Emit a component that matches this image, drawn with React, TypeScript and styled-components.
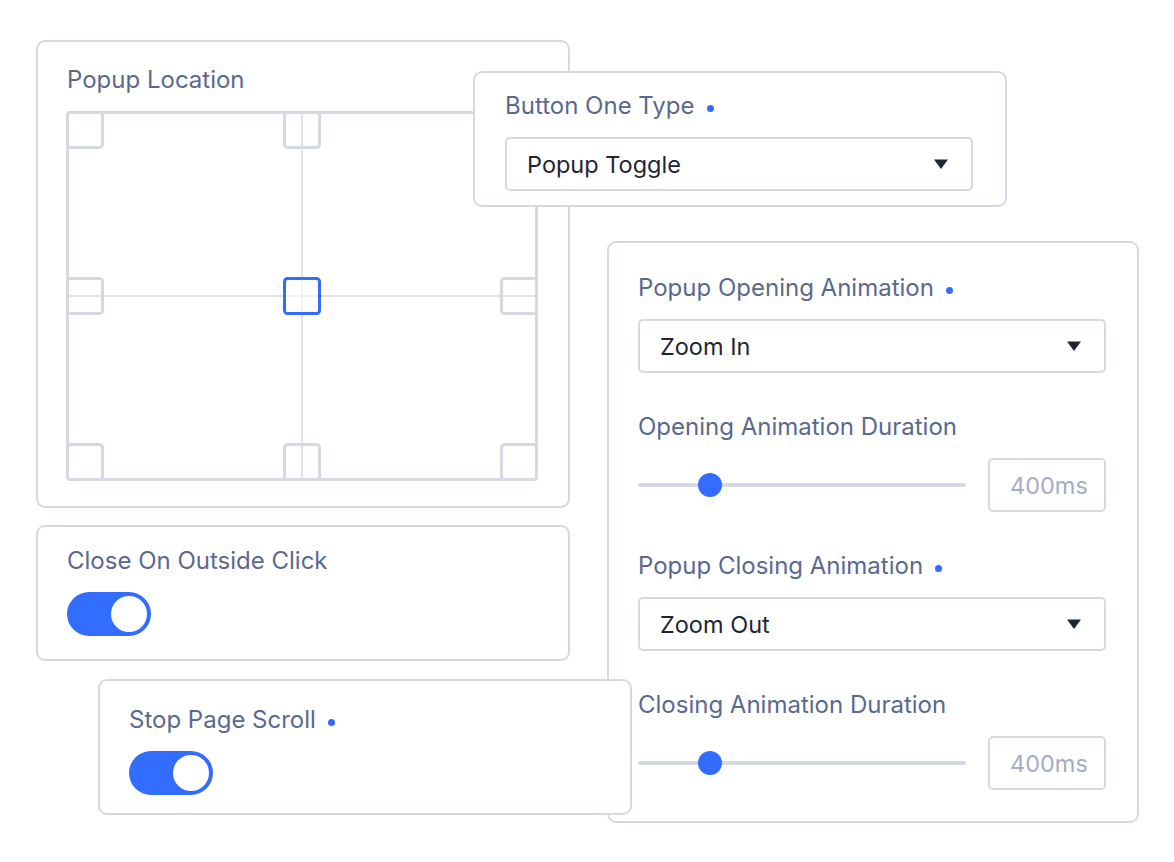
import React from 'react';
import styled, { createGlobalStyle } from 'styled-components';

const GlobalStyle = createGlobalStyle`
  * { box-sizing: border-box; }
  body {
    margin: 0;
    background: #ffffff;
    font-family: Inter, "Noto Sans", "Liberation Sans", sans-serif;
  }
`;

const BORDER = '#d4d9e4';
const BLUE = '#336dff';

const Canvas = styled.div`
  position: relative;
  width: 1174px;
  height: 862px;
  overflow: hidden;
  background: #fff;
`;

// cards float on the canvas and overlap each other
const Card = styled.div<{ $x: number; $y: number; $w: number; $pad: string }>`
  position: absolute;
  left: ${(p) => p.$x}px;
  top: ${(p) => p.$y}px;
  width: ${(p) => p.$w}px;
  padding: ${(p) => p.$pad};
  background: #fff;
  border: 2px solid ${BORDER};
  border-radius: 9px;
  display: flex;
  flex-direction: column;
  gap: 39px;
`;

const Field = styled.div`
  display: flex;
  flex-direction: column;
  gap: 18px;
`;

const Label = styled.div`
  display: flex;
  align-items: center;
  gap: 12px;
  padding-top: 2px;
  font-size: 24px;
  line-height: 26px;
  font-weight: 400;
  color: #5a6990;
  white-space: nowrap;
`;

const Dot = styled.span`
  width: 7px;
  height: 7px;
  margin-top: 4px;
  border-radius: 50%;
  background: ${BLUE};
`;

const Select = styled.div`
  height: 54px;
  display: flex;
  align-items: center;
  justify-content: space-between;
  padding: 0 23px 0 20px;
  border: 2px solid ${BORDER};
  border-radius: 5px;
  font-size: 23.5px;
  font-weight: 400;
  color: #1f2633;
`;

const SliderRow = styled.div`
  display: flex;
  align-items: center;
  gap: 22px;
`;

const Track = styled.div`
  position: relative;
  flex: 1;
  height: 4px;
  border-radius: 2px;
  background: ${BORDER};
`;

const Thumb = styled.span<{ $at: number }>`
  position: absolute;
  top: 50%;
  left: ${(p) => p.$at - 12}px;
  width: 24px;
  height: 24px;
  margin-top: -12px;
  border-radius: 50%;
  background: ${BLUE};
`;

const ValueBox = styled.div`
  width: 118px;
  height: 54px;
  display: flex;
  align-items: center;
  padding-left: 20px;
  border: 2px solid ${BORDER};
  border-radius: 5px;
  font-size: 23.5px;
  font-weight: 400;
  color: #a4acc6;
`;

const Toggle = styled.div`
  width: 84px;
  height: 44px;
  padding: 4px;
  border-radius: 22px;
  background: ${BLUE};
  display: flex;
  justify-content: flex-end;
  align-items: center;
`;

const Knob = styled.span`
  width: 36px;
  height: 36px;
  border-radius: 50%;
  background: #fff;
`;

const Caret = () => (
  <svg width="14" height="10" viewBox="0 0 14 10">
    <path d="M0 0.5 L14 0.5 L7 10 Z" fill="#1f2633" />
  </svg>
);

const LocationGrid = () => {
  const xs = [0, 217, 434];
  const ys = [0, 166, 332];
  return (
    <svg width="472" height="370" viewBox="0 0 472 370">
      <rect x="1.5" y="1.5" width="469" height="367" rx="2" fill="none" stroke={BORDER} strokeWidth="3" />
      <line x1="236" y1="0" x2="236" y2="370" stroke={BORDER} strokeWidth="1.5" />
      <line x1="0" y1="185" x2="472" y2="185" stroke={BORDER} strokeWidth="1.5" />
      {ys.map((y, r) =>
        xs.map((x, c) => {
          const active = r === 1 && c === 1;
          return (
            <rect
              key={`${r}-${c}`}
              x={x + 1.5}
              y={y + 1.5}
              width="35"
              height="35"
              rx="3"
              fill={active ? 'rgba(255,255,255,0.6)' : 'none'}
              stroke={active ? BLUE : BORDER}
              strokeWidth="3"
            />
          );
        })
      )}
    </svg>
  );
};

const SelectField: React.FC<{ label: string; value: string }> = ({ label, value }) => (
  <Field>
    <Label>
      {label}
      <Dot />
    </Label>
    <Select>
      {value}
      <Caret />
    </Select>
  </Field>
);

const SliderField: React.FC<{ label: string; value: string; at: number }> = ({ label, value, at }) => (
  <Field>
    <Label>{label}</Label>
    <SliderRow>
      <Track>
        <Thumb $at={at} />
      </Track>
      <ValueBox>{value}</ValueBox>
    </SliderRow>
  </Field>
);

const ToggleField: React.FC<{ label: string; dot?: boolean }> = ({ label, dot }) => (
  <Field>
    <Label>
      {label}
      {dot && <Dot />}
    </Label>
    <Toggle>
      <Knob />
    </Toggle>
  </Field>
);

export default function App() {
  return (
    <>
      <GlobalStyle />
      <Canvas>
        <Card $x={36} $y={40} $w={534} $pad="23px 30px 25px 28px">
          <Field>
            <Label style={{ paddingLeft: 1 }}>Popup Location</Label>
            <LocationGrid />
          </Field>
        </Card>

        <Card $x={473} $y={71} $w={534} $pad="18px 32px 14px 30px">
          <SelectField label="Button One Type" value="Popup Toggle" />
        </Card>

        <Card $x={607} $y={241} $w={532} $pad="30px 31px 31px 29px">
          <SelectField label="Popup Opening Animation" value="Zoom In" />
          <SliderField label="Opening Animation Duration" value="400ms" at={72} />
          <SelectField label="Popup Closing Animation" value="Zoom Out" />
          <SliderField label="Closing Animation Duration" value="400ms" at={72} />
        </Card>

        <Card $x={36} $y={525} $w={534} $pad="19px 29px 23px 29px">
          <ToggleField label="Close On Outside Click" />
        </Card>

        <Card $x={98} $y={679} $w={534} $pad="24px 29px 18px 29px">
          <ToggleField label="Stop Page Scroll" dot />
        </Card>
      </Canvas>
    </>
  );
}
